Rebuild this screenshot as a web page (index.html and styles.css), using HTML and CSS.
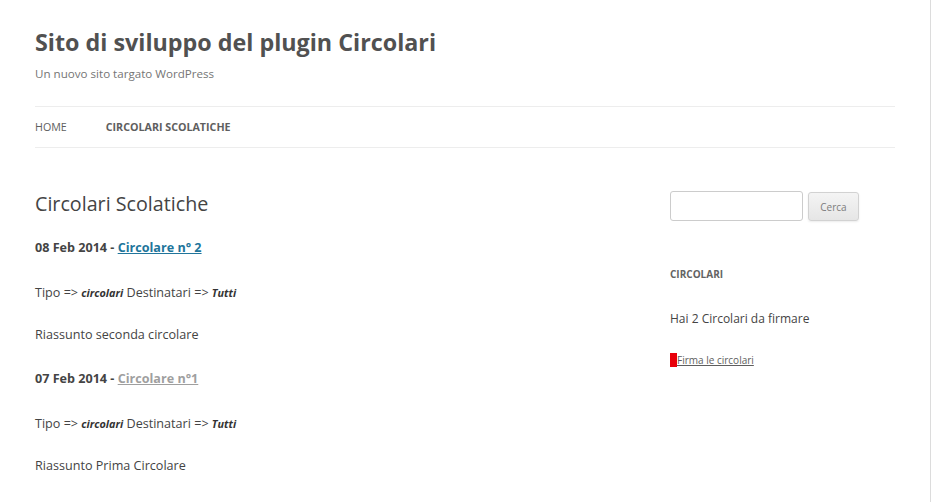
FILE: index.html
```html
<!DOCTYPE html>
<html lang="it">
<head>
<meta charset="utf-8">
<title>Sito di sviluppo del plugin Circolari</title>
<link rel="stylesheet" href="styles.css">
</head>
<body>
<div class="page">
  <div class="wrap">
    <header class="site-header">
      <h2 class="site-title">Sito di sviluppo del plugin Circolari</h2>
      <p class="site-desc">Un nuovo sito targato WordPress</p>
      <nav class="main-nav">
        <a href="#" class="nav-item">HOME</a>
        <a href="#" class="nav-item current">CIRCOLARI SCOLATICHE</a>
      </nav>
    </header>
    <div class="main">
      <section class="content">
        <h1 class="entry-title">Circolari Scolatiche</h1>
        <p class="date">08 Feb 2014 - <a href="#" class="link">Circolare n° 2</a></p>
        <p class="tipo">Tipo =&gt; <em>circolari</em> Destinatari =&gt; <em>Tutti</em></p>
        <p class="summary">Riassunto seconda circolare</p>
        <p class="date">07 Feb 2014 - <a href="#" class="link visited">Circolare n°1</a></p>
        <p class="tipo">Tipo =&gt; <em>circolari</em> Destinatari =&gt; <em>Tutti</em></p>
        <p class="summary">Riassunto Prima Circolare</p>
      </section>
      <aside class="sidebar">
        <form class="search">
          <input type="text" class="search-input">
          <button type="button" class="search-btn">Cerca</button>
        </form>
        <h3 class="widget-title">CIRCOLARI</h3>
        <p class="widget-text">Hai 2 Circolari da firmare</p>
        <p class="widget-link"><span class="mark"></span><a href="#">Firma le circolari</a></p>
      </aside>
    </div>
  </div>
</div>
</body>
</html>
```

FILE: styles.css
```css
html, body {
  margin: 0;
  padding: 0;
  background: #fff;
}
body {
  font-family: "Open Sans", "DejaVu Sans", sans-serif;
  color: #444;
}
.page {
  width: 930px;
  height: 502px;
  border-right: 1px solid #dcdcdc;
  overflow: hidden;
}
.wrap {
  width: 860px;
  padding-left: 35px;
}
.site-header {
  padding-top: 24px;
}
.site-title {
  margin: 0;
  font-size: 23.3px;
  line-height: 36px;
  font-weight: 700;
  color: #515151;
}
.site-desc {
  margin: 4px 0 0;
  font-size: 11.6px;
  line-height: 20px;
  color: #757575;
}
.main-nav {
  margin-top: 22px;
  border-top: 1px solid #ededed;
  border-bottom: 1px solid #ededed;
  height: 40px;
  display: flex;
  align-items: center;
  gap: 39px;
}
.nav-item {
  font-size: 10.7px;
  line-height: 40px;
  color: #5e5e5e;
  text-decoration: none;
}
.nav-item.current {
  font-weight: 700;
  color: #5e5e5e;
}
.main {
  display: flex;
  justify-content: space-between;
  padding-top: 41px;
}
.content {
  width: 560px;
}
.entry-title {
  margin: 0 0 17px;
  font-size: 19.7px;
  line-height: 30px;
  font-weight: 400;
  color: #444;
}
.content p {
  margin: 0;
  font-size: 12.6px;
  line-height: 24px;
}
.date {
  font-weight: 700;
  margin-bottom: 21px !important;
}
.tipo {
  margin-bottom: 18px !important;
}
.summary {
  margin-bottom: 20px !important;
}
.content p.tipo:last-of-type {
  margin-bottom: 17px !important;
}
.tipo em {
  font-weight: 700;
  font-style: italic;
  font-size: 10.8px;
  color: #333;
}
.link {
  color: #21759b;
  text-decoration: underline;
}
.link.visited {
  color: #9f9f9f;
}
.sidebar {
  width: 225px;
  padding-top: 2px;
}
.search {
  display: flex;
  align-items: center;
  gap: 5px;
  margin: 0;
}
.search-input {
  box-sizing: border-box;
  width: 133px;
  height: 30px;
  border: 1px solid #ccc;
  border-radius: 3px;
  margin: 0;
  padding: 0 6px;
}
.search-btn {
  box-sizing: border-box;
  width: 51px;
  height: 29px;
  border: 1px solid #d2d2d2;
  border-radius: 3px;
  background: linear-gradient(#f4f4f4, #e6e6e6);
  color: #7c7c7c;
  font-family: "Open Sans", sans-serif;
  font-size: 10px;
  padding: 0;
  margin-top: 1px;
  box-shadow: 0 1px 2px rgba(64,64,64,0.1);
}
.widget-title {
  margin: 44px 0 0;
  font-size: 10px;
  line-height: 18px;
  font-weight: 700;
  color: #636363;
}
.widget-text {
  margin: 26px 0 0;
  font-size: 12px;
  line-height: 20px;
  color: #444;
}
.widget-link {
  margin: 23px 0 0;
  font-size: 10px;
  line-height: 16px;
  display: flex;
  align-items: center;
}
.mark {
  display: inline-block;
  width: 7px;
  height: 14px;
  background: #e8000b;
}
.widget-link a {
  color: #5e5e5e;
  text-decoration: underline;
}
```
